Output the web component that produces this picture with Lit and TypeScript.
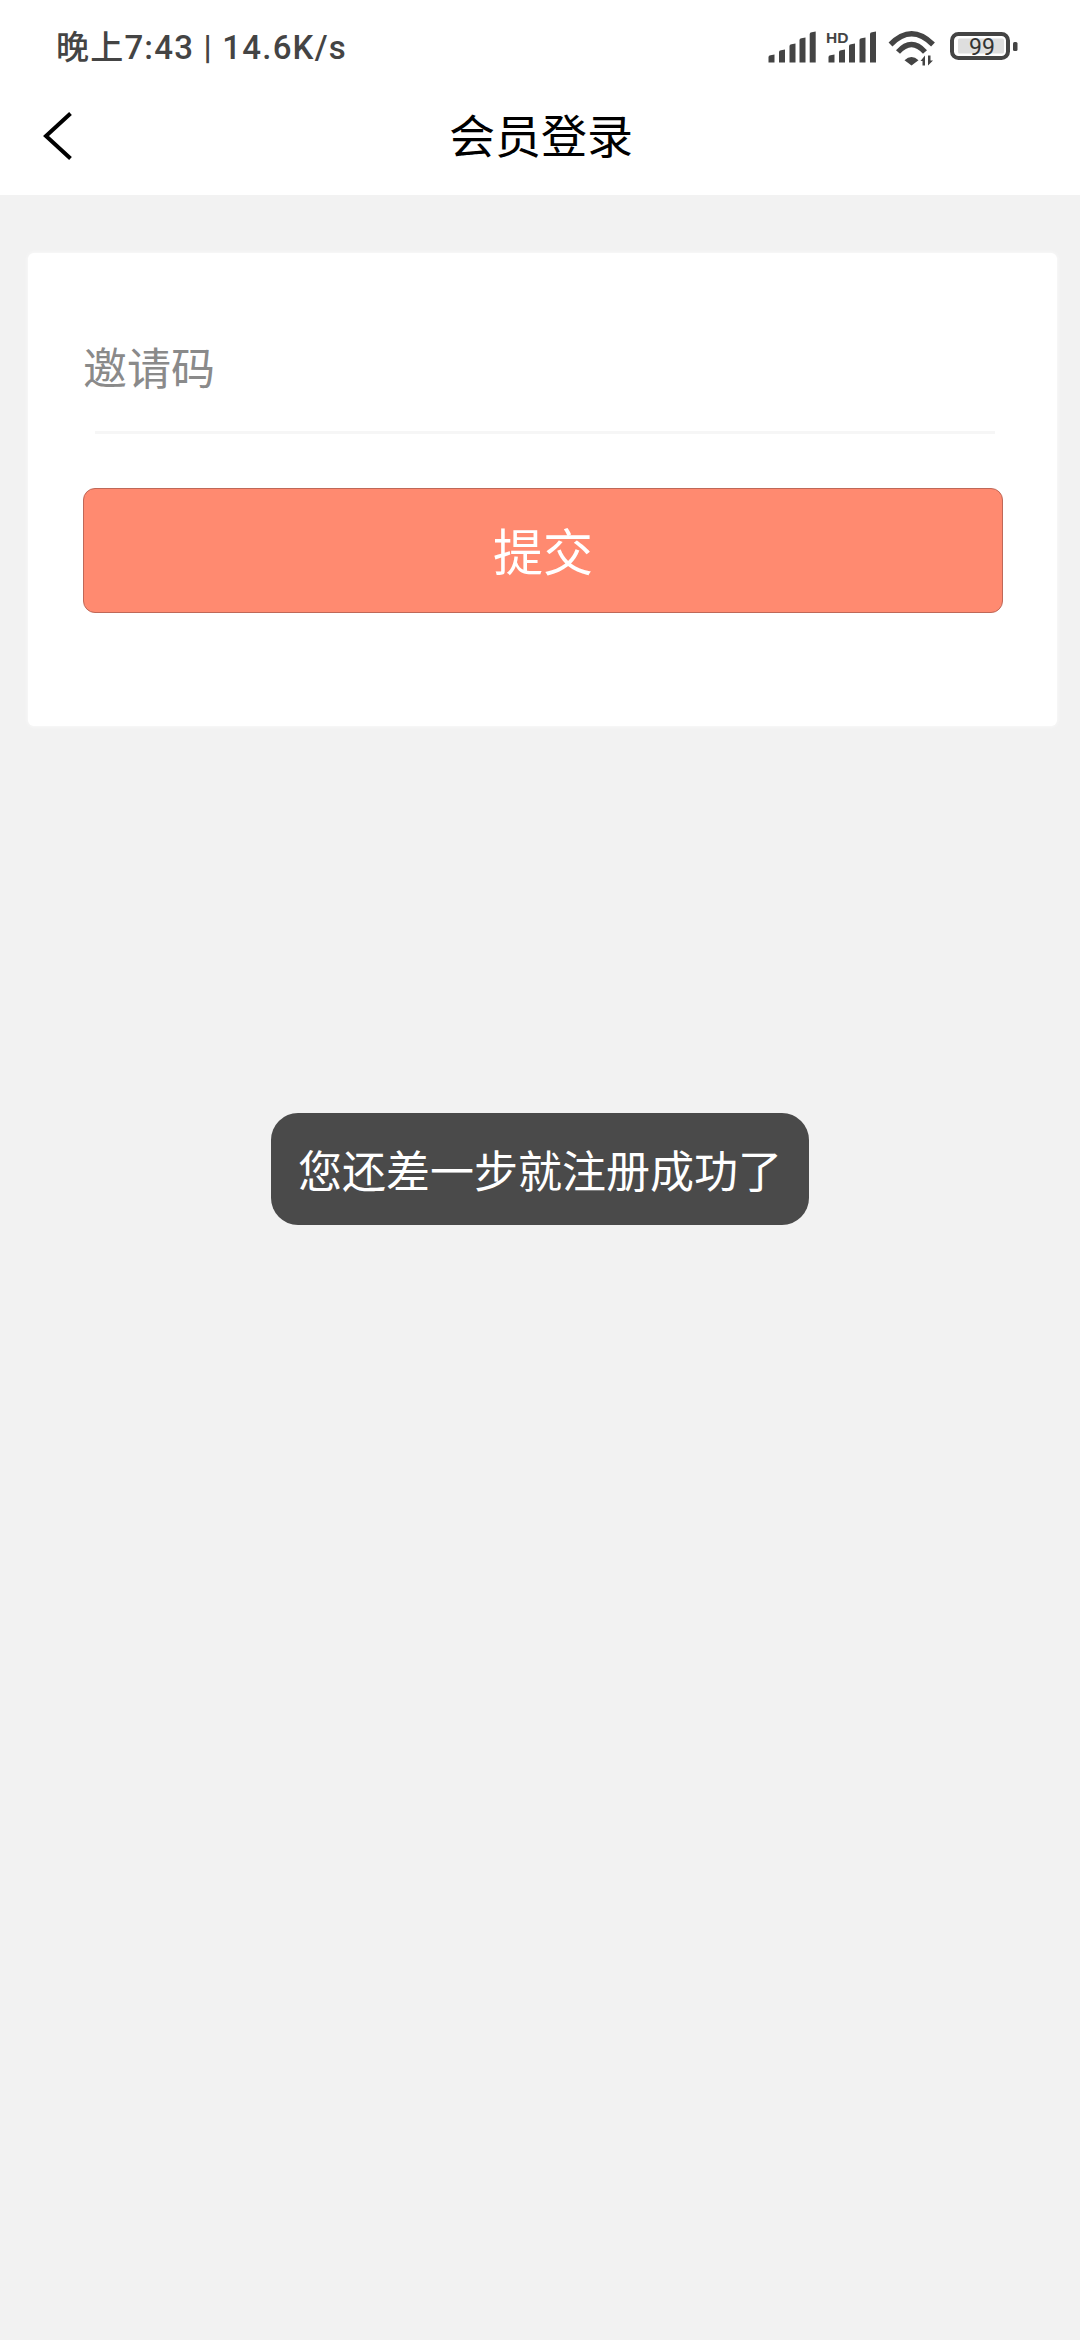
import { LitElement, html, css, svg } from "lit";
import { customElement } from "lit/decorators.js";

const bars = (xs: number[]) => {
  const tops = [55, 50, 44, 38, 32];
  return xs.map((x, i) => svg`<path d="M${x} 62.5 V${tops[i] + 2} Q${x} ${tops[i] + 0.5} ${x + 2} ${tops[i] + 0.2} L${x + 6} ${tops[i] - 0.6} V62.5 Z" fill="#444"/>`);
};

@customElement("app-root")
export class AppRoot extends LitElement {
  static styles = css`
    :host {
      display: block;
      position: relative;
      width: 1080px;
      height: 2340px;
      overflow: hidden;
      background: #f2f2f2;
      font-family: Roboto, "Noto Sans CJK SC", sans-serif;
    }
    .top {
      background: #fff;
      height: 195px;
      display: flex;
      flex-direction: column;
    }
    .status {
      height: 96px;
      padding: 0 0 0 56px;
      display: flex;
      align-items: center;
      justify-content: space-between;
      box-sizing: border-box;
    }
    .clock {
      font-size: 33px;
      font-weight: 500;
      line-height: 40px;
      color: #444;
      letter-spacing: 1.2px;
      white-space: nowrap;
    }
    .icons {
      display: block;
      width: 260px;
      height: 60px;
      margin-right: 59px;
      flex: none;
    }
    .nav {
      position: relative;
      height: 80px;
      display: flex;
      align-items: center;
      justify-content: center;
    }
    .back {
      position: absolute;
      left: 40px;
      top: 12px;
      width: 40px;
      height: 56px;
      display: block;
    }
    .title {
      font-family: "Noto Sans CJK SC", sans-serif;
      font-size: 46px;
      line-height: 60px;
      color: #000;
      margin-top: -7px;
      margin-left: 2px;
    }
    .card {
      margin: 58px 23px 0 28px;
      height: 473px;
      background: #fff;
      border-radius: 6px;
      box-shadow: 0 0 4px rgba(255, 255, 255, 0.8);
      box-sizing: border-box;
      padding: 0 54px 0 55px;
      display: flex;
      flex-direction: column;
    }
    .field {
      height: 178px;
      box-sizing: border-box;
      padding-top: 83px;
      font-family: "Noto Sans CJK SC", sans-serif;
      font-size: 44px;
      line-height: 60px;
      color: #8a8a8a;
    }
    .rule {
      height: 3px;
      margin: 0 8px 0 12px;
      background: #f6f6f6;
    }
    .submit {
      margin-top: 54px;
      height: 125px;
      box-sizing: border-box;
      border: 1px solid #bf6858;
      border-radius: 12px;
      background: #ff8a70;
      color: #fff;
      display: flex;
      align-items: center;
      justify-content: center;
      padding-bottom: 4px;
      font-family: "Noto Sans CJK SC", sans-serif;
      font-size: 50px;
      line-height: 60px;
    }
    .toast {
      position: absolute;
      left: 271px;
      top: 1113px;
      width: 538px;
      height: 112px;
      border-radius: 27px;
      background: #4a4a4a;
      color: #fff;
      display: flex;
      align-items: center;
      justify-content: center;
      font-family: "Noto Sans CJK SC", sans-serif;
      font-size: 44px;
      line-height: 60px;
      white-space: nowrap;
    }
  `;

  render() {
    return html`
      <div class="top">
        <div class="status">
          <span class="clock">晚上7:43 | 14.6K/s</span>
          <svg class="icons" viewBox="760 18 260 60" aria-hidden="true">
            ${bars([767.5, 778, 788.5, 798.5, 808.7])}
            ${bars([827.5, 838, 848, 858.5, 869])}
            <text x="825" y="42.5" font-family="Liberation Sans, sans-serif" font-weight="700" font-size="15.5" fill="#444">HD</text>
            <g fill="none" stroke="#444" stroke-width="5.4" stroke-linecap="butt">
              <path d="M889.5 44.5 Q910.5 23 932 44.5"/>
              <path d="M897 52 Q910.5 37 924 52"/>
            </g>
            <path d="M903.5 60.2 Q910.5 54 917.5 60.2 L910.5 65.5 Z" fill="#444"/>
            <path d="M921.5 65.5 V61 H919.5 L924 55.5 V65.5 Z M927 55.5 V65.5 L932 60.5 H929.5 V55.5 Z" fill="#444"/>
            <rect x="951" y="34" width="56" height="24" rx="6.5" fill="none" stroke="#444" stroke-width="4"/>
            <rect x="957" y="38.5" width="46" height="15" rx="1.5" fill="#dedede"/>
            <rect x="1012" y="42" width="4.5" height="9" rx="1.5" fill="#444"/>
            <text x="968" y="54.5" font-family="Roboto, sans-serif" font-size="23" fill="#333">99</text>
          </svg>
        </div>
        <div class="nav">
          <svg class="back" viewBox="40 112 40 56" aria-hidden="true">
            <path d="M70.5 117.5 L46 140 L70.5 162.5" fill="none" stroke="#000" stroke-width="4"/>
          </svg>
          <span class="title">会员登录</span>
        </div>
      </div>
      <div class="card">
        <div class="field">邀请码</div>
        <div class="rule"></div>
        <div class="submit">提交</div>
      </div>
      <div class="toast">您还差一步就注册成功了</div>
    `;
  }
}
